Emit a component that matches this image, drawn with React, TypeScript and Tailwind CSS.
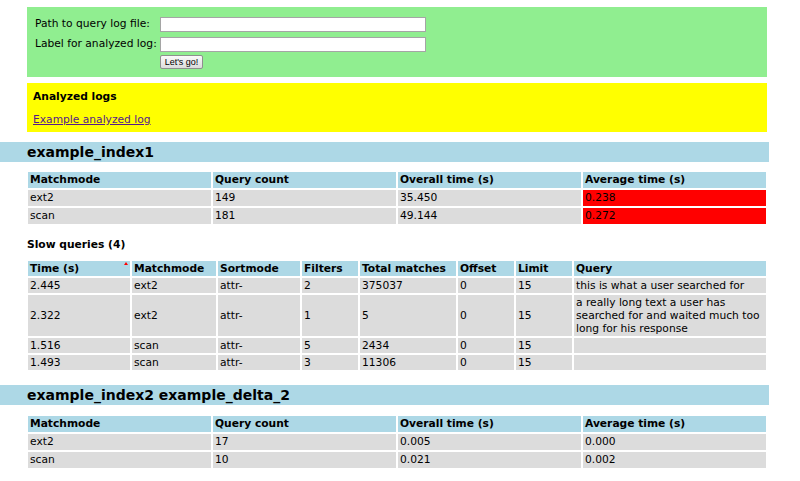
import React from "react";

const font = { fontFamily: '"DejaVu Sans", Verdana, sans-serif' };

function SummaryTable({ rows, red }: { rows: string[][]; red?: boolean }) {
  return (
    <table className="ml-[26px] w-[742px] table-fixed border-separate border-spacing-[2px] text-[10.7px] leading-[14px] text-black">
      <thead>
        <tr className="bg-[#add8e6]">
          <th className="h-[16px] px-[2px] py-0 text-left font-bold">Matchmode</th>
          <th className="h-[16px] px-[2px] py-0 text-left font-bold">Query count</th>
          <th className="h-[16px] px-[2px] py-0 text-left font-bold">Overall time (s)</th>
          <th className="h-[16px] px-[2px] py-0 text-left font-bold">Average time (s)</th>
        </tr>
      </thead>
      <tbody>
        {rows.map((r, i) => (
          <tr key={i}>
            <td className="h-[16px] bg-[#dcdcdc] px-[2px] py-0">{r[0]}</td>
            <td className="h-[16px] bg-[#dcdcdc] px-[2px] py-0">{r[1]}</td>
            <td className="h-[16px] bg-[#dcdcdc] px-[2px] py-0">{r[2]}</td>
            <td className={red ? "h-[16px] bg-[#ff0000] px-[2px] py-0" : "h-[16px] bg-[#dcdcdc] px-[2px] py-0"}>{r[3]}</td>
          </tr>
        ))}
      </tbody>
    </table>
  );
}

const slow = [
  ["2.445", "ext2", "attr-", "2", "375037", "0", "15", "this is what a user searched for"],
  ["2.322", "ext2", "attr-", "1", "5", "0", "15", "a really long text a user has searched for and waited much too long for his response"],
  ["1.516", "scan", "attr-", "5", "2434", "0", "15", ""],
  ["1.493", "scan", "attr-", "3", "11306", "0", "15", ""],
];

export default function App() {
  const th = "h-[15px] px-[2px] py-0 text-left font-bold";
  const td = "bg-[#dcdcdc] px-[2px] py-[1px] align-middle";
  return (
    <div className="w-[800px] min-h-[481px] bg-white pt-[7px] text-[10.7px] text-black" style={font}>
      <div className="ml-[27px] h-[70px] w-[740px] bg-[#90ee90] pl-[8px] pt-[9px]">
        <div className="flex items-center">
          <span className="w-[125px] shrink-0 whitespace-nowrap">Path to query log file:</span>
          <input className="h-[15px] w-[266px] border border-[#a5a5a5] bg-white" />
        </div>
        <div className="mt-[4px] flex items-center">
          <span className="w-[125px] shrink-0 whitespace-nowrap">Label for analyzed log:</span>
          <input className="h-[15px] w-[266px] border border-[#a5a5a5] bg-white" />
        </div>
        <div className="mt-[3px] flex">
          <span className="w-[125px] shrink-0" />
          <button
            className="h-[14px] w-[43px] rounded-[2px] border border-[#8f8f8f] bg-gradient-to-b from-[#fbfbfb] to-[#dcdcdc] text-[9px] leading-[12px]"
            style={{ fontFamily: '"Liberation Sans", Arial, sans-serif' }}
          >
            Let's go!
          </button>
        </div>
      </div>

      <div className="ml-[27px] mt-[6px] h-[49px] w-[740px] bg-[#ffff00] pl-[6px] pt-[7px]">
        <div className="font-bold leading-[14px]">Analyzed logs</div>
        <a href="#" className="mt-[9px] block leading-[14px] text-[#551a8b] underline">
          Example analyzed log
        </a>
      </div>

      <h2 className="mt-[10px] h-[20px] w-[769px] bg-[#add8e6] pl-[27px] text-[14px] font-bold leading-[20px]">example_index1</h2>
      <div className="mt-[8px]">
        <SummaryTable red rows={[["ext2", "149", "35.450", "0.238"], ["scan", "181", "49.144", "0.272"]]} />
      </div>

      <div className="ml-[27px] mt-[12px] font-bold leading-[14px]">Slow queries (4)</div>

      <table className="ml-[26px] mt-[7px] w-[742px] table-fixed border-separate border-spacing-[2px] leading-[13px]">
        <thead>
          <tr className="bg-[#add8e6]">
            <th className={th + " relative w-[102px]"}>
              Time (s)
              <span className="absolute right-[2px] top-[1px] h-0 w-0 border-x-[2px] border-b-[3px] border-x-transparent border-b-[#ff0000]" />
            </th>
            <th className={th + " w-[84px]"}>Matchmode</th>
            <th className={th + " w-[82px]"}>Sortmode</th>
            <th className={th + " w-[56px]"}>Filters</th>
            <th className={th + " w-[96px]"}>Total matches</th>
            <th className={th + " w-[56px]"}>Offset</th>
            <th className={th + " w-[56px]"}>Limit</th>
            <th className={th + " w-[192px]"}>Query</th>
          </tr>
        </thead>
        <tbody>
          {slow.map((r, i) => (
            <tr key={i}>
              {r.map((c, j) => (
                <td key={j} className={td}>
                  {c}
                </td>
              ))}
            </tr>
          ))}
        </tbody>
      </table>

      <h2 className="mt-[13px] h-[20px] w-[769px] bg-[#add8e6] pl-[27px] text-[14px] font-bold leading-[20px]">example_index2 example_delta_2</h2>
      <div className="mt-[9px]">
        <SummaryTable rows={[["ext2", "17", "0.005", "0.000"], ["scan", "10", "0.021", "0.002"]]} />
      </div>
    </div>
  );
}
